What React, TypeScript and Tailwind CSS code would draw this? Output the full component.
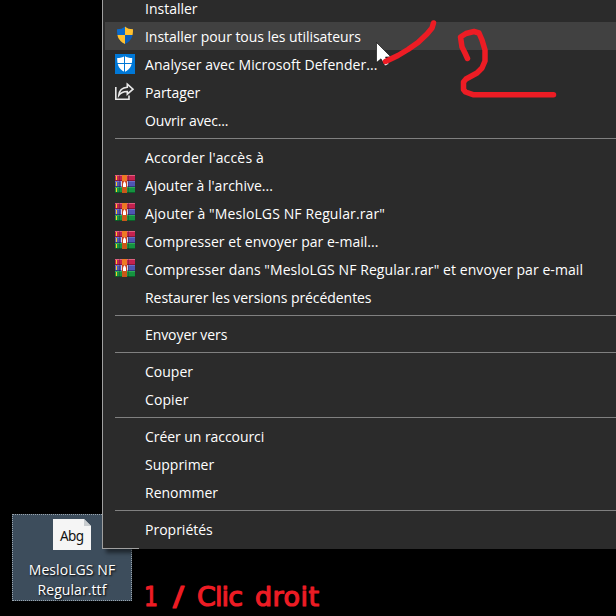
import type { ReactNode } from 'react';

function UacShield() {
  return (
    <svg width="20" height="20" viewBox="0 0 20 20">
      <defs>
        <clipPath id="shield">
          <path d="M10 .5C8 2.6 5 3.2 2 3.2C2 10 3 14.5 10 18C17 14.5 18 10 18 3.2C15 3.2 12 2.6 10 .5Z" />
        </clipPath>
      </defs>
      <g clipPath="url(#shield)">
        <rect width="10" height="9" fill="#0a6acb" />
        <rect x="10" width="10" height="9" fill="#ffc130" />
        <rect y="9" width="10" height="11" fill="#ffc130" />
        <rect x="10" y="9" width="10" height="11" fill="#0a5cb8" />
      </g>
    </svg>
  );
}

function DefenderIcon() {
  return (
    <svg width="20" height="20" viewBox="0 0 20 20">
      <rect width="20" height="20" fill="#0078d7" />
      <path d="M9.7 2C7.6 3.6 5 4 2.2 4C2.2 10 3 14.8 9.7 18C16.4 14.8 17.2 10 17.2 4C14.4 4 11.8 3.6 9.7 2Z" fill="#fff" />
      <path d="M9.5 2V18M2 9.5H17.5" stroke="#0078d7" strokeWidth="1" />
    </svg>
  );
}

function ShareIcon() {
  return (
    <svg width="20" height="20" viewBox="0 0 20 20" fill="none" stroke="#e8e8e8" strokeWidth="1.6">
      <path d="M.8 5V17.2H14V13.5" />
      <path d="M12.3 2.2L18 7.2L12.3 12.2V9.5C8.5 9.4 6 10.4 3.8 13.4C4.2 8.5 7.5 5.5 12.3 5.2Z" />
    </svg>
  );
}

function RarIcon() {
  return (
    <svg width="20" height="20" viewBox="0 0 20 20">
      <rect width="20" height="6" fill="#c4214f" />
      <rect width="20" height="1" fill="#e0607f" />
      <rect y="5" width="20" height="1" fill="#8c1538" />
      <rect y="6" width="20" height="6" fill="#4f55b3" />
      <rect y="6" width="20" height="1" fill="#6a70c8" />
      <rect y="11" width="20" height="1" fill="#32377c" />
      <rect y="12" width="20" height="6" fill="#159340" />
      <rect y="12" width="20" height="1" fill="#2fae58" />
      <rect y="17" width="20" height="1" fill="#0b5f28" />
      <path d="M1.5 1V5M1.5 7V11M1.5 13V17" stroke="#f5cc2a" />
      <path d="M4.5 0V18M13.5 0V18" stroke="#222" strokeOpacity=".3" />
      <rect x="7" width="5" height="18" fill="#ee7a24" />
      <rect x="7" y="12" width="5" height="6" fill="#c9581a" />
      <path d="M6.5 11.5V6.5H7.5M11.5 6.5H12.5V11.5" fill="none" stroke="#d8d3dc" />
      <rect x="7" y="6" width="5" height="6" fill="#c8401f" />
      <path d="M8 12V9L9 6.5H10L11 9V12Z" fill="#fff" />
    </svg>
  );
}

function Item({ icon, children, active = false, track = '' }: { icon?: ReactNode; children: ReactNode; active?: boolean; track?: string }) {
  return (
    <div className={`ml-0.5 flex h-7 shrink-0 items-center pl-2.5 ${active ? 'bg-[#414141]' : ''}`}>
      <span className="mr-2.5 block size-5 shrink-0">{icon}</span>
      <span className={`whitespace-nowrap ${track}`}>{children}</span>
    </div>
  );
}

function Separator() {
  return <div className="mt-1 mb-1 ml-3 h-px shrink-0 bg-[#808080]" />;
}

function ContextMenu() {
  return (
    <div className="relative z-10 -mt-1.5 ml-[102px] flex h-[555px] flex-col border-l border-[#a0a0a0] bg-[#2b2b2b] text-[14px] text-white shadow-[4px_4px_4px_rgba(0,0,0,0.5)]">
      <Item>Installer</Item>
      <Item icon={<UacShield />} active track="tracking-[-0.05px]">Installer pour tous les utilisateurs</Item>
      <Item icon={<DefenderIcon />} track="tracking-[0.06px]">Analyser avec Microsoft Defender...</Item>
      <Item icon={<ShareIcon />} track="tracking-[-0.1px]">Partager</Item>
      <Item track="tracking-[-0.15px]">Ouvrir avec...</Item>
      <Separator />
      <Item track="tracking-[0.17px]">Accorder l'accès à</Item>
      <Item icon={<RarIcon />}>Ajouter à l'archive...</Item>
      <Item icon={<RarIcon />} track="tracking-[0.11px]">Ajouter à "MesloLGS NF Regular.rar"</Item>
      <Item icon={<RarIcon />} track="tracking-[0.03px]">Compresser et envoyer par e-mail...</Item>
      <Item icon={<RarIcon />} track="tracking-[0.075px]">Compresser dans "MesloLGS NF Regular.rar" et envoyer par e-mail</Item>
      <Item track="tracking-[-0.06px]">Restaurer les versions précédentes</Item>
      <Separator />
      <Item track="tracking-[-0.08px]">Envoyer vers</Item>
      <Separator />
      <Item>Couper</Item>
      <Item track="tracking-[0.1px]">Copier</Item>
      <Separator />
      <Item track="tracking-[-0.06px]">Créer un raccourci</Item>
      <Item>Supprimer</Item>
      <Item>Renommer</Item>
      <Separator />
      <Item>Propriétés</Item>
      <div className="mt-auto h-px w-9 shrink-0 bg-[#a0a0a0]" />
    </div>
  );
}

function DesktopFile() {
  return (
    <div className="absolute top-[514px] left-3 flex h-[87px] w-[120px] flex-col items-center border border-dotted border-[#9aa5ae] bg-[#3d4d5c] pt-[3px] text-center text-[14px] leading-5 text-white">
      <svg className="h-8 w-10 shrink-0" viewBox="0 0 40 32">
        <path d="M1 1H32L39 8V32H1Z" fill="#f5f5f5" />
        <path d="M32 1V8H39Z" fill="#c9cdd0" />
        <text x="8" y="23" fontSize="13.5" fontFamily="Noto Sans, sans-serif" fill="#111" textLength="24">Abg</text>
      </svg>
      <span className="mt-2.5 tracking-[0.08px] [text-shadow:1px_1px_2px_#000]">MesloLGS NF<br />Regular.ttf</span>
    </div>
  );
}

function Annotations() {
  return (
    <svg className="absolute inset-0 z-20" width="616" height="616" viewBox="0 0 616 616" fill="none">
      <path d="M376.5 42.5V62.5L381 58.8L385 66L389 64L385.5 57H391Z" fill="#fff" stroke="#000" strokeWidth=".6" />
      <g stroke="#ed1c24" strokeWidth="5.5" strokeLinecap="round" strokeLinejoin="round">
        <path d="M385.5 61.5L398 55.5L408 49.5L418 42.5L427 34L432 28L433.5 23" />
        <path d="M467.5 58.5L465 53L462 47L460.5 37L466 33.5L474 31.5L479 33L482 40L485 50V61L482 68L477 73L466 79L463.5 82V89.5L465.5 92L473 94.7H553.5" />
      </g>
      <g fill="#ed1c24" stroke="#ed1c24" strokeWidth="1.2" strokeLinejoin="round" fontSize="27" fontFamily="DejaVu Sans, sans-serif">
        <text x="144" y="606" textLength="14" lengthAdjust="spacingAndGlyphs">1</text>
        <text x="173" y="606" textLength="11" lengthAdjust="spacingAndGlyphs">/</text>
        <text x="197" y="606" textLength="46" lengthAdjust="spacing">Clic</text>
        <text x="255" y="606" textLength="64" lengthAdjust="spacing">droit</text>
      </g>
    </svg>
  );
}

export default function App() {
  return (
    <main className="relative h-[616px] w-[616px] overflow-hidden bg-black font-['Open_Sans',sans-serif]">
      <DesktopFile />
      <ContextMenu />
      <Annotations />
    </main>
  );
}
